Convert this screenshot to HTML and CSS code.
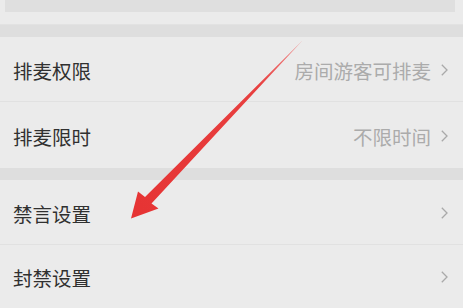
FILE: index.html
```html
<!DOCTYPE html>
<html lang="zh-CN">
<head>
<meta charset="utf-8">
<title>设置</title>
<link rel="stylesheet" href="styles.css">
</head>
<body>
<div class="page">
  <div class="top"><div class="top-inner"></div></div>
  <div class="gap"></div>
  <div class="group">
    <div class="row row-a">
      <span class="label">排麦权限</span>
      <span class="value">房间游客可排麦<svg class="chev" width="7" height="12" viewBox="0 0 7 12"><polyline points="0.8,0.8 6,6 0.8,11.2" fill="none" stroke="#a9a9a9" stroke-width="1.3"/></svg></span>
    </div>
    <div class="row row-b">
      <span class="label">排麦限时</span>
      <span class="value">不限时间<svg class="chev" width="7" height="12" viewBox="0 0 7 12"><polyline points="0.8,0.8 6,6 0.8,11.2" fill="none" stroke="#a9a9a9" stroke-width="1.3"/></svg></span>
    </div>
  </div>
  <div class="gap"></div>
  <div class="group">
    <div class="row row-c">
      <span class="label">禁言设置</span>
      <span class="value"><svg class="chev" width="7" height="12" viewBox="0 0 7 12"><polyline points="0.8,0.8 6,6 0.8,11.2" fill="none" stroke="#a9a9a9" stroke-width="1.3"/></svg></span>
    </div>
    <div class="row row-d">
      <span class="label">封禁设置</span>
      <span class="value"><svg class="chev" width="7" height="12" viewBox="0 0 7 12"><polyline points="0.8,0.8 6,6 0.8,11.2" fill="none" stroke="#a9a9a9" stroke-width="1.3"/></svg></span>
    </div>
  </div>
  <svg class="arrow" width="463" height="308" viewBox="0 0 463 308">
    <defs>
      <linearGradient id="ag" x1="302" y1="41" x2="131" y2="218" gradientUnits="userSpaceOnUse">
        <stop offset="0" stop-color="#f08a8a"/>
        <stop offset="0.25" stop-color="#e84040"/>
        <stop offset="1" stop-color="#e63333"/>
      </linearGradient>
    </defs>
    <polygon points="302.5,40.5 151.5,203.5 158.5,208.5 131,218.5 138,191.5 145,197" fill="url(#ag)"/>
  </svg>
</div>
</body>
</html>
```
FILE: styles.css
```css
html, body {
  margin: 0;
  padding: 0;
}
body {
  background: #ebebeb;
  font-family: "Noto Sans CJK SC", "Noto Sans", sans-serif;
}
.page {
  position: relative;
  width: 463px;
  height: 308px;
  overflow: hidden;
}
.top {
  height: 24px;
  padding: 0 8px 0 5px;
  background: #ebebeb;
  border-bottom: 1px solid #e2e2e2;
}
.top-inner {
  height: 12px;
  background: #dfdfdf;
}
.gap {
  height: 12px;
  background: #dedede;
}
.group {
  background: #ebebeb;
}
.row {
  display: flex;
  align-items: center;
  justify-content: space-between;
  padding: 2px 15px 0 13px;
  box-sizing: border-box;
  border-bottom: 1px solid #e1e1e1;
}
.row:last-child {
  border-bottom: none;
}
.row-a { height: 65px; }
.row-b { height: 66px; }
.row-c { height: 65px; }
.row-d { height: 62px; }
.label {
  font-size: 19.5px;
  color: #303030;
}
.value {
  display: flex;
  align-items: center;
  font-size: 19.5px;
  color: #ababab;
}
.chev {
  display: block;
  margin-left: 10px;
}
.arrow {
  position: absolute;
  left: 0;
  top: 0;
  pointer-events: none;
}
```
